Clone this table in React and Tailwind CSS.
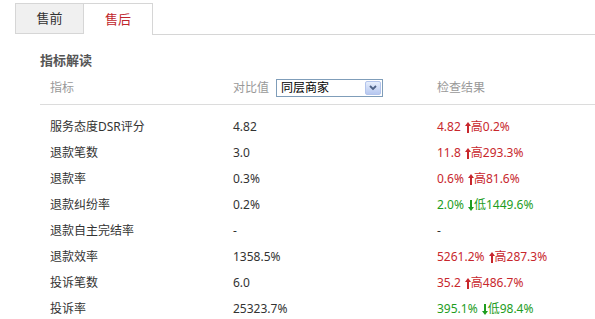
import React from 'react';

const rows = [
  { name: '服务态度DSR评分', cmp: '4.82', val: '4.82', dir: 'up', diff: '高0.2%' },
  { name: '退款笔数', cmp: '3.0', val: '11.8', dir: 'up', diff: '高293.3%' },
  { name: '退款率', cmp: '0.3%', val: '0.6%', dir: 'up', diff: '高81.6%' },
  { name: '退款纠纷率', cmp: '0.2%', val: '2.0%', dir: 'down', diff: '低1449.6%' },
  { name: '退款自主完结率', cmp: '-', val: '-', dir: null, diff: '' },
  { name: '退款效率', cmp: '1358.5%', val: '5261.2%', dir: 'up', diff: '高287.3%' },
  { name: '投诉笔数', cmp: '6.0', val: '35.2', dir: 'up', diff: '高486.7%' },
  { name: '投诉率', cmp: '25323.7%', val: '395.1%', dir: 'down', diff: '低98.4%' },
];

function Arrow({ dir }) {
  return (
    <svg width="6" height="11" viewBox="0 0 6 11" className="ml-[1px] inline-block">
      {dir === 'up' ? (
        <path d="M3 0 L6 4 H4 V11 H2 V4 H0 Z" fill="currentColor" />
      ) : (
        <path d="M3 11 L6 7 H4 V0 H2 V7 H0 Z" fill="currentColor" />
      )}
    </svg>
  );
}

export default function App() {
  return (
    <div
      className="w-[595px] h-[319px] overflow-hidden bg-white text-[12px] text-[#333]"
      style={{ fontFamily: '"Noto Sans", "Noto Sans CJK SC", sans-serif' }}
    >
      {/* tabs */}
      <div className="flex pt-[3px] pl-[15px]">
        <div className="w-[69px] h-[31px] flex items-center justify-center bg-[#f0f0f0] border border-[#d6d6d6] text-[13px] text-[#333]">
          售前
        </div>
        <div className="w-[69px] h-[32px] flex items-center justify-center bg-white border border-l-0 border-b-0 border-[#d6d6d6] text-[13px] text-[#c0262c]">
          售后
        </div>
        <div className="flex-1 border-b border-[#d6d6d6]"></div>
      </div>

      <div className="pl-[40px]">
        <h3 className="pt-[15px] text-[13px] font-bold text-[#555] leading-[20px]">指标解读</h3>

        {/* header */}
        <div className="flex items-center h-[34px] mt-[1px] border-b border-[#dcdcdc] text-[#999]">
          <div className="w-[193px] pl-[10px]">指标</div>
          <div className="w-[204px] flex items-center">
            <span>对比值</span>
            <div className="ml-[7px] w-[107px] h-[18px] border border-[#7f9db9] flex items-center justify-between text-[#000]">
              <span className="pl-[4px]">同层商家</span>
              <span className="w-[16px] h-[14px] mr-[1px] rounded-[2px] bg-gradient-to-b from-[#e6eefc] to-[#b7c8f0] border border-[#b3c4ec] flex items-center justify-center">
                <svg width="8" height="6" viewBox="0 0 8 6">
                  <path d="M1 1 L4 4 L7 1" stroke="#4d6185" strokeWidth="1.8" fill="none" />
                </svg>
              </span>
            </div>
          </div>
          <div>检查结果</div>
        </div>

        {/* rows */}
        <div className="pt-[9px]">
          {rows.map((r) => (
            <div key={r.name} className="flex items-center h-[26px]">
              <div className="w-[193px] pl-[10px]">{r.name}</div>
              <div className="w-[204px]">{r.cmp}</div>
              <div
                className={
                  r.dir === 'up'
                    ? 'flex items-center text-[#c8272d]'
                    : r.dir === 'down'
                    ? 'flex items-center text-[#1e9d1e]'
                    : 'flex items-center'
                }
              >
                <span>{r.val}</span>
                {r.dir && (
                  <>
                    <span className="w-[3px]"></span>
                    <Arrow dir={r.dir} />
                    <span>{r.diff}</span>
                  </>
                )}
              </div>
            </div>
          ))}
        </div>
      </div>
    </div>
  );
}
